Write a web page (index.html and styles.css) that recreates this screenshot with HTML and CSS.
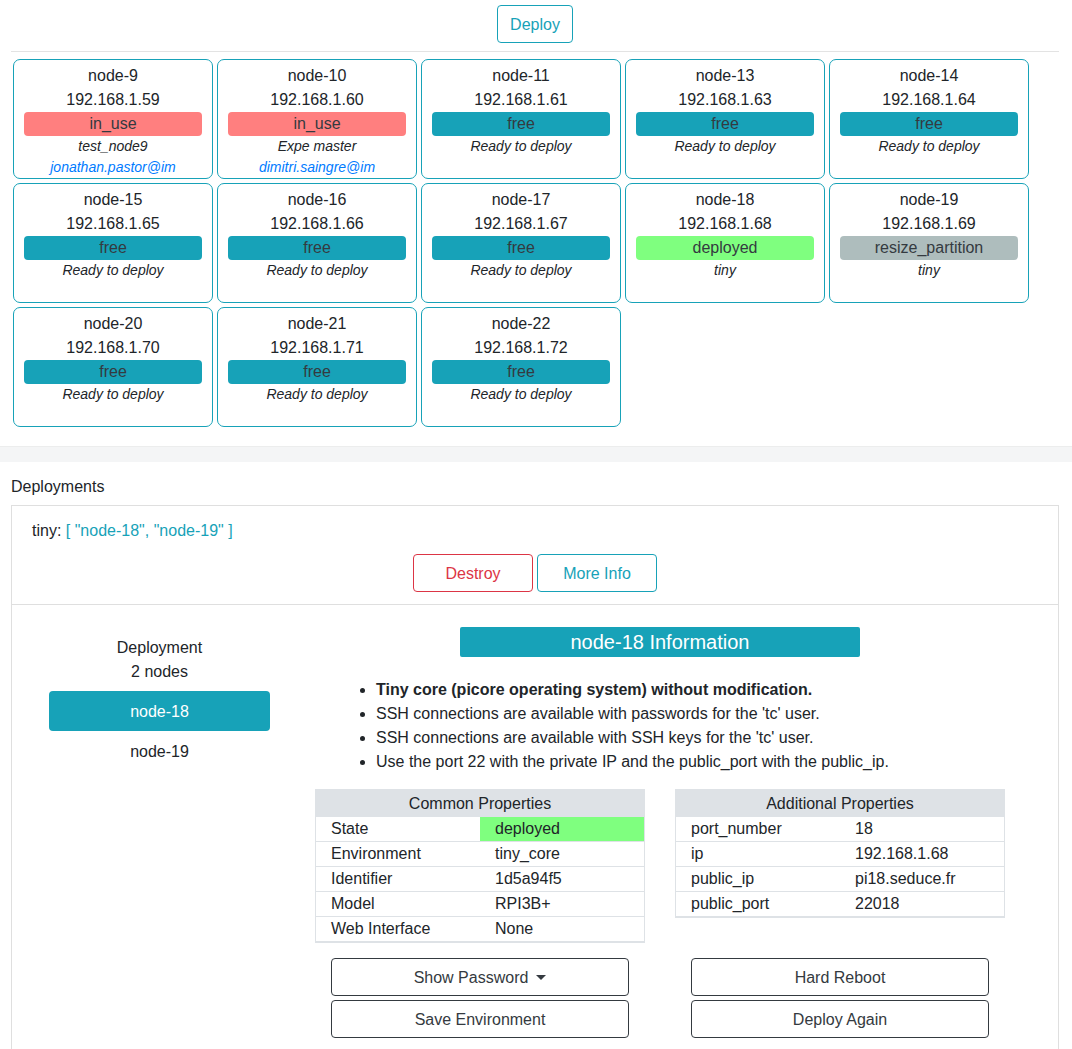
FILE: index.html
```html
<!DOCTYPE html>
<html lang="en">
<head>
<meta charset="utf-8">
<title>Nodes</title>
<link rel="stylesheet" href="styles.css">
</head>
<body>
<div class="top">
  <div class="deploy-row"><button class="btn btn-info">Deploy</button></div>
  <div class="sep"></div>
  <div class="nodes">
    <div class="node"><div class="line">node-9</div><div class="line">192.168.1.59</div><div class="status in-use">in_use</div><div class="desc">test_node9</div><div class="owner">jonathan.pastor@im</div></div>
    <div class="node"><div class="line">node-10</div><div class="line">192.168.1.60</div><div class="status in-use">in_use</div><div class="desc">Expe master</div><div class="owner">dimitri.saingre@im</div></div>
    <div class="node"><div class="line">node-11</div><div class="line">192.168.1.61</div><div class="status free">free</div><div class="desc">Ready to deploy</div></div>
    <div class="node"><div class="line">node-13</div><div class="line">192.168.1.63</div><div class="status free">free</div><div class="desc">Ready to deploy</div></div>
    <div class="node"><div class="line">node-14</div><div class="line">192.168.1.64</div><div class="status free">free</div><div class="desc">Ready to deploy</div></div>
    <div class="node"><div class="line">node-15</div><div class="line">192.168.1.65</div><div class="status free">free</div><div class="desc">Ready to deploy</div></div>
    <div class="node"><div class="line">node-16</div><div class="line">192.168.1.66</div><div class="status free">free</div><div class="desc">Ready to deploy</div></div>
    <div class="node"><div class="line">node-17</div><div class="line">192.168.1.67</div><div class="status free">free</div><div class="desc">Ready to deploy</div></div>
    <div class="node"><div class="line">node-18</div><div class="line">192.168.1.68</div><div class="status deployed">deployed</div><div class="desc">tiny</div></div>
    <div class="node"><div class="line">node-19</div><div class="line">192.168.1.69</div><div class="status resize">resize_partition</div><div class="desc">tiny</div></div>
    <div class="node"><div class="line">node-20</div><div class="line">192.168.1.70</div><div class="status free">free</div><div class="desc">Ready to deploy</div></div>
    <div class="node"><div class="line">node-21</div><div class="line">192.168.1.71</div><div class="status free">free</div><div class="desc">Ready to deploy</div></div>
    <div class="node"><div class="line">node-22</div><div class="line">192.168.1.72</div><div class="status free">free</div><div class="desc">Ready to deploy</div></div>
  </div>
</div>
<div class="band"></div>
<div class="deployments">
  <div class="title">Deployments</div>
  <div class="box">
    <div class="box-head">
      <div class="env">tiny: <span class="env-nodes">[ "node-18", "node-19" ]</span></div>
      <div class="actions">
        <button class="btn btn-danger">Destroy</button>
        <button class="btn btn-info">More Info</button>
      </div>
    </div>
    <div class="box-body">
      <div class="side">
        <div class="line">Deployment</div>
        <div class="line count">2 nodes</div>
        <div class="pill active">node-18</div>
        <div class="pill">node-19</div>
      </div>
      <div class="main">
        <div class="info-title">node-18 Information</div>
        <ul class="notes">
          <li><strong>Tiny core (picore operating system) without modification.</strong></li>
          <li>SSH connections are available with passwords for the 'tc' user.</li>
          <li>SSH connections are available with SSH keys for the 'tc' user.</li>
          <li>Use the port 22 with the private IP and the public_port with the public_ip.</li>
        </ul>
        <div class="props">
          <table class="ptable">
            <thead><tr><th colspan="2">Common Properties</th></tr></thead>
            <tbody>
              <tr><td>State</td><td class="ok">deployed</td></tr>
              <tr><td>Environment</td><td>tiny_core</td></tr>
              <tr><td>Identifier</td><td>1d5a94f5</td></tr>
              <tr><td>Model</td><td>RPI3B+</td></tr>
              <tr><td>Web Interface</td><td>None</td></tr>
            </tbody>
          </table>
          <table class="ptable">
            <thead><tr><th colspan="2">Additional Properties</th></tr></thead>
            <tbody>
              <tr><td>port_number</td><td>18</td></tr>
              <tr><td>ip</td><td>192.168.1.68</td></tr>
              <tr><td>public_ip</td><td>pi18.seduce.fr</td></tr>
              <tr><td>public_port</td><td>22018</td></tr>
            </tbody>
          </table>
          <div class="btn-stack">
            <button class="btn btn-dark">Show Password<span class="caret"></span></button>
            <button class="btn btn-dark">Save Environment</button>
          </div>
          <div class="btn-stack">
            <button class="btn btn-dark">Hard Reboot</button>
            <button class="btn btn-dark">Deploy Again</button>
          </div>
        </div>
      </div>
    </div>
  </div>
</div>
</body>
</html>
```

FILE: styles.css
```css
* { box-sizing: border-box; }
body {
  margin: 0;
  font-family: "Liberation Sans", Arial, sans-serif;
  font-size: 16px;
  line-height: 24px;
  color: #212529;
  background: #fff;
}
.btn {
  font-family: inherit;
  font-size: 16px;
  line-height: 24px;
  padding: 7px 12px 5px;
  background: #fff;
  border: 1px solid;
  border-radius: 4px;
  cursor: pointer;
}
.btn-info { color: #17a2b8; border-color: #17a2b8; }
.btn-danger { color: #dc3545; border-color: #dc3545; }
.btn-dark { color: #343a40; border-color: #343a40; width: 100%; }

.top { padding: 5px 13px 17px 11px; }
.deploy-row { display: flex; justify-content: center; }
.sep { margin-top: 8px; border-top: 1px solid #e3e3e3; }
.nodes {
  display: flex;
  flex-wrap: wrap;
  margin-top: 5px;
}
.node {
  width: 200px;
  height: 120px;
  margin: 2px;
  border: 1px solid #17a2b8;
  border-radius: 7px;
  padding: 4px 10px 0;
  text-align: center;
}
.status {
  height: 24px;
  line-height: 24px;
  border-radius: 4px;
  color: #343a40;
}
.in-use { background: #ff7f7f; }
.free { background: #17a2b8; }
.deployed { background: #7fff7f; }
.resize { background: #aebdbd; }
.desc, .owner {
  font-size: 14px;
  line-height: 21px;
  font-style: italic;
}
.owner { color: #007bff; }

.band {
  height: 16px;
  background: #f4f5f6;
  border-top: 1px solid #eceded;
}

.deployments { padding: 13px 13px 0 11px; }
.title { margin-bottom: 6px; }
.box { border: 1px solid #dfdfdf; }
.box-head {
  padding: 13px 20px 12px;
  border-bottom: 1px solid #dfdfdf;
}
.env-nodes { color: #17a2b8; }
.actions {
  display: flex;
  justify-content: center;
  gap: 4px;
  margin-top: 11px;
}
.actions .btn { width: 120px; }

.box-body {
  display: flex;
  padding-top: 22px;
  padding-bottom: 30px;
}
.side {
  width: 295px;
  padding: 9px 37px 0;
  text-align: center;
}
.count { margin-bottom: 7px; }
.pill {
  padding: 9px 16px 7px;
  border-radius: 4px;
}
.pill.active { background: #17a2b8; color: #fff; }

.main {
  width: 706px;
  padding: 0 8px;
}
.info-title {
  width: 400px;
  margin: 0 auto;
  height: 30px;
  line-height: 31px;
  font-size: 20px;
  background: #17a2b8;
  color: #fff;
  text-align: center;
  border-radius: 2px;
}
.notes {
  margin: 21px 0 15px;
  padding-left: 61px;
}
.props {
  display: grid;
  grid-template-columns: 330px 330px;
  column-gap: 30px;
  row-gap: 15px;
  align-items: start;
}
.ptable {
  width: 330px;
  border-collapse: collapse;
  table-layout: fixed;
  border: 1px solid #dee2e6;
  border-bottom-width: 2px;
}
.ptable th {
  background: #dee2e6;
  font-weight: normal;
  height: 27px;
  padding: 2px 0 0;
  line-height: 24px;
  text-align: center;
}
.ptable td {
  border-top: 1px solid #dee2e6;
  padding: 0 15px;
  height: 25px;
  line-height: 24px;
  width: 50%;
}
.ptable td.ok { background: #7fff7f; }
.btn-stack {
  display: flex;
  flex-direction: column;
  gap: 4px;
  padding: 0 16px;
}
.caret {
  display: inline-block;
  margin-left: 8px;
  vertical-align: 3px;
  border-top: 5px solid #343a40;
  border-left: 5px solid transparent;
  border-right: 5px solid transparent;
}
```
